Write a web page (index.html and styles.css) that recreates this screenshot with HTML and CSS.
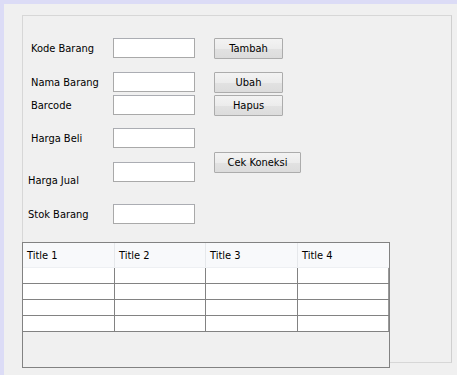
FILE: index.html
```html
<!DOCTYPE html>
<html>
<head>
<meta charset="utf-8">
<link rel="stylesheet" href="styles.css">
</head>
<body>
<div class="window">
  <div class="frame">
    <div class="form">
      <div class="fields">
        <div class="row r1"><span class="lbl">Kode Barang</span><span class="txt"></span></div>
        <div class="row r2"><span class="lbl">Nama Barang</span><span class="txt"></span></div>
        <div class="row r3"><span class="lbl">Barcode</span><span class="txt"></span></div>
        <div class="row r4"><span class="lbl">Harga Beli</span><span class="txt"></span></div>
        <div class="row r5"><span class="lbl lbl-near lbl-low">Harga Jual</span><span class="txt"></span></div>
        <div class="row r6"><span class="lbl lbl-near">Stok Barang</span><span class="txt"></span></div>
      </div>
      <div class="buttons">
        <div class="btn b1">Tambah</div>
        <div class="btn b2">Ubah</div>
        <div class="btn b3">Hapus</div>
        <div class="btn b4 wide">Cek Koneksi</div>
      </div>
    </div>
    <div class="grid">
      <div class="head">
        <div class="hc">Title 1</div>
        <div class="hc">Title 2</div>
        <div class="hc">Title 3</div>
        <div class="hc last">Title 4</div>
      </div>
      <div class="trow"><div class="c"></div><div class="c"></div><div class="c"></div><div class="c last"></div></div>
      <div class="trow"><div class="c"></div><div class="c"></div><div class="c"></div><div class="c last"></div></div>
      <div class="trow"><div class="c"></div><div class="c"></div><div class="c"></div><div class="c last"></div></div>
      <div class="trow"><div class="c"></div><div class="c"></div><div class="c"></div><div class="c last"></div></div>
    </div>
  </div>
</div>
</body>
</html>
```

FILE: styles.css
```css
html, body {
  margin: 0;
  padding: 0;
}
body {
  width: 457px;
  height: 375px;
  overflow: hidden;
  background: #dcdcf6;
  font-family: "DejaVu Sans Condensed", "DejaVu Sans", sans-serif;
  font-stretch: condensed;
  font-size: 11px;
  color: #000;
}
.window {
  margin: 4px 0 0 4px;
  height: 371px;
  background: #f0f0f0;
  padding: 11px 0 0 18px;
  box-sizing: border-box;
}
.frame {
  width: 430px;
  height: 348px;
  box-sizing: border-box;
  border: 1px solid #d7d7d7;
  border-right-color: #cfcfcf;
}
.form {
  display: flex;
}
.fields {
  padding-top: 22px;
  width: 191px;
}
.row {
  display: flex;
  align-items: center;
  height: 20px;
}
.r2 { margin-top: 14px; }
.r3 { margin-top: 3px; }
.r4 { margin-top: 13px; }
.r5 { margin-top: 14px; }
.r6 { margin-top: 22px; }
.lbl {
  width: 82px;
  padding-left: 8px;
  white-space: nowrap;
}
.lbl-near {
  width: 85px;
  padding-left: 5px;
}
.lbl-low {
  margin-top: 16px;
}
.txt {
  width: 82px;
  height: 20px;
  box-sizing: border-box;
  background: #fff;
  border: 1px solid #a9a9a9;
  border-top-color: #abadb3;
}
.buttons {
  padding-top: 22px;
  display: flex;
  flex-direction: column;
  align-items: flex-start;
}
.btn {
  width: 69px;
  height: 21px;
  box-sizing: border-box;
  border: 1px solid #acacac;
  border-radius: 1px;
  background: linear-gradient(#f3f3f3 0%, #ececec 50%, #e2e2e2 51%, #dcdcdc 100%);
  display: flex;
  align-items: center;
  justify-content: center;
  padding-bottom: 1px;
}
.b2 { margin-top: 13px; }
.b3 { margin-top: 2px; }
.b4 { margin-top: 36px; }
.wide { width: 87px; }
.grid {
  margin-top: 18px;
  margin-left: -1px;
  width: 368px;
  height: 126px;
  box-sizing: border-box;
  border: 1px solid #828282;
  background: #f0f0f0;
}
.head {
  display: grid;
  grid-template-columns: 92px 91px 92px 91px;
  height: 25px;
  background: #f8f9fb;
  border-bottom: 1px solid #eef0f3;
  box-sizing: border-box;
}
.hc {
  border-right: 1px solid #e6e8eb;
  padding-left: 4px;
  display: flex;
  align-items: center;
  padding-top: 1px;
}
.hc.last { border-right: 0; }
.trow {
  display: grid;
  grid-template-columns: 92px 91px 92px 91px;
  height: 16px;
  background: #fff;
  border-bottom: 1px solid #828282;
  box-sizing: border-box;
}
.c {
  border-right: 1px solid #828282;
}
.c.last { border-right: 1px solid #9a9a9a; }
```
